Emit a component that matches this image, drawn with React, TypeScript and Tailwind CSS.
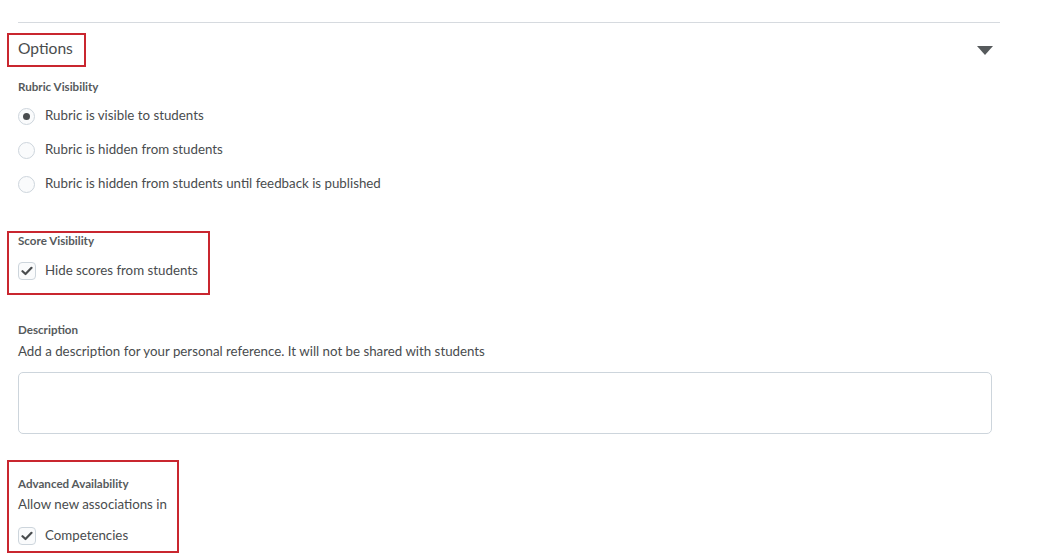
import React from "react";

const font = { fontFamily: "Lato, 'Noto Sans', sans-serif" };

function Radio({ checked, label }: { checked?: boolean; label: string }) {
  return (
    <label className="flex items-center h-[34px] gap-[10px] text-[13.3px] text-[#494c4e]">
      <span className="w-[17px] h-[17px] rounded-full border border-[#cdd5dc] bg-[#fafbfc] flex items-center justify-center">
        {checked && <span className="w-[7px] h-[7px] rounded-full bg-[#494c4e]" />}
      </span>
      <span className="-mt-[1px]">{label}</span>
    </label>
  );
}

function Check({ label, className = "h-[34px]" }: { label: string; className?: string }) {
  return (
    <label className={"flex items-center gap-[9px] text-[13.3px] text-[#494c4e] " + className}>
      <span className="w-[18px] h-[18px] rounded-[4px] border border-[#cdd5dc] bg-[#fafbfc] flex items-center justify-center">
        <svg width="12" height="10" viewBox="0 0 12 10">
          <path d="M1.5 5.2 L4.5 8 L10.5 1.8" fill="none" stroke="#494c4e" strokeWidth="2.2" strokeLinecap="round" strokeLinejoin="round" />
        </svg>
      </span>
      <span className="-mt-[1px]">{label}</span>
    </label>
  );
}

const labelClass = "text-[11.6px] leading-[16px] font-bold text-[#565a5c]";
const boxClass = "-ml-[11px] pl-[9px] border-2 border-[#c9262f]";

export default function App() {
  return (
    <div className="bg-white min-h-[558px] pt-[22px] pl-[18px]" style={font}>
      <div className="w-[982px]">
        <div className="border-t border-[#d6dadf]" />

        <div className="mt-[10px] flex items-center justify-between h-[34px]">
          <div className={boxClass + " h-[34px] w-[79px] flex items-center text-[15.6px] text-[#494c4e]"}>
            <span className="-mt-[2px]">Options</span>
          </div>
          <svg width="16" height="9" viewBox="0 0 16 9" className="mr-[7px]">
            <path d="M0 0 H16 L8 9 Z" fill="#565a5c" />
          </svg>
        </div>

        <div className={labelClass + " mt-[12px]"}>Rubric Visibility</div>
        <div className="mt-[4px]">
          <Radio checked label="Rubric is visible to students" />
          <Radio label="Rubric is hidden from students" />
          <Radio label="Rubric is hidden from students until feedback is published" />
        </div>

        <div className={boxClass + " mt-[30px] w-[203px] h-[64px]"}>
          <div className={labelClass}>Score Visibility</div>
          <Check label="Hide scores from students" className="h-[34px] mt-[5px]" />
        </div>

        <div className={labelClass + " mt-[27px]"}>Description</div>
        <div className="mt-[3px] text-[13.3px] leading-[20px] text-[#494c4e]">
          Add a description for your personal reference. It will not be shared with students
        </div>
        <textarea className="mt-[11px] block w-[974px] h-[62px] rounded-[5px] border border-[#cdd5dc] resize-none outline-none" />

        <div className={boxClass + " mt-[26px] w-[172px] h-[93px] pt-[14px]"}>
          <div className={labelClass}>Advanced Availability</div>
          <div className="mt-[2px] text-[13.3px] leading-[20px] text-[#494c4e]">Allow new associations in</div>
          <Check label="Competencies" className="h-[30px] mt-[7px]" />
        </div>
      </div>
    </div>
  );
}
